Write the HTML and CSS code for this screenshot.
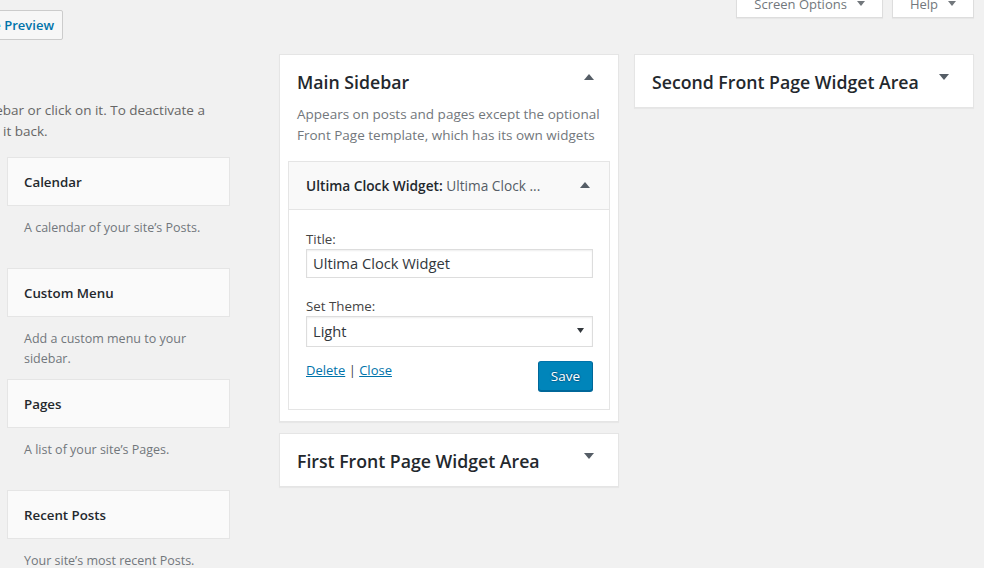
FILE: index.html
```html
<!DOCTYPE html>
<html lang="en">
<head>
<meta charset="utf-8">
<title>Widgets</title>
<link rel="stylesheet" href="styles.css">
</head>
<body>
<header class="top">
  <div class="title-area">
    <a class="page-action" href="#">Manage with Live Preview</a>
  </div>
  <div class="screen-meta">
    <button class="meta-tab">Screen Options <svg class="caret" viewBox="0 0 8 5" width="8" height="5"><path d="M0 0H8L4 5Z"/></svg></button>
    <button class="meta-tab">Help <svg class="caret" viewBox="0 0 8 5" width="8" height="5"><path d="M0 0H8L4 5Z"/></svg></button>
  </div>
</header>

<main class="columns">
  <section class="available">
    <p class="avail-desc">To activate a widget drag it to a sidebar or click on it. To deactivate a widget and delete its settings, drag it back.</p>
    <div class="widget-list">
      <div class="widget-item">
        <div class="widget-top"><h3>Calendar</h3></div>
        <p class="widget-desc">A calendar of your site’s Posts.</p>
      </div>
      <div class="widget-item">
        <div class="widget-top"><h3>Custom Menu</h3></div>
        <p class="widget-desc">Add a custom menu to your sidebar.</p>
      </div>
      <div class="widget-item">
        <div class="widget-top"><h3>Pages</h3></div>
        <p class="widget-desc">A list of your site’s Pages.</p>
      </div>
      <div class="widget-item">
        <div class="widget-top"><h3>Recent Posts</h3></div>
        <p class="widget-desc">Your site’s most recent Posts.</p>
      </div>
    </div>
  </section>

  <section class="sidebars">
    <div class="sidebar">
      <div class="sidebar-head">
        <h2>Main Sidebar</h2>
        <svg class="toggle" viewBox="0 0 10 6" width="10" height="6"><path d="M0 6L5 0L10 6Z"/></svg>
      </div>
      <p class="sidebar-desc">Appears on posts and pages except the optional Front Page template, which has its own widgets</p>
      <div class="widget">
        <div class="widget-head">
          <h3>Ultima Clock Widget:<span class="in-title"> Ultima Clock ...</span></h3>
          <svg class="toggle" viewBox="0 0 10 6" width="10" height="6"><path d="M0 6L5 0L10 6Z"/></svg>
        </div>
        <div class="widget-body">
          <label class="field-label" for="w-title">Title:</label>
          <input class="text-input" id="w-title" type="text" value="Ultima Clock Widget">
          <label class="field-label theme-label" for="w-theme">Set Theme:</label>
          <div class="select-wrap">
            <select class="select" id="w-theme"><option>Light</option><option>Dark</option></select>
            <svg class="select-arrow" viewBox="0 0 7 5" width="7" height="5"><path d="M0 0H7L3.5 5Z"/></svg>
          </div>
          <div class="controls">
            <div class="links"><a href="#">Delete</a> | <a href="#">Close</a></div>
            <button class="button-primary">Save</button>
          </div>
        </div>
      </div>
    </div>
    <div class="sidebar collapsed">
      <div class="sidebar-head">
        <h2>First Front Page Widget Area</h2>
        <svg class="toggle" viewBox="0 0 10 6" width="10" height="6"><path d="M0 0H10L5 6Z"/></svg>
      </div>
    </div>
  </section>

  <section class="sidebars">
    <div class="sidebar collapsed">
      <div class="sidebar-head">
        <h2>Second Front Page Widget Area</h2>
        <svg class="toggle" viewBox="0 0 10 6" width="10" height="6"><path d="M0 0H10L5 6Z"/></svg>
      </div>
    </div>
  </section>
</main>
</body>
</html>
```

FILE: styles.css
```css
* { box-sizing: border-box; }
html, body { margin: 0; }
body {
  background: #f1f1f1;
  font-family: "Open Sans", "Noto Sans", sans-serif;
  font-size: 13px;
  color: #444;
  width: 984px;
  height: 568px;
  overflow: hidden;
}

/* top bar */
.top {
  display: flex;
  justify-content: space-between;
  align-items: flex-start;
  height: 54px;
}
.title-area {
  width: 63px;
  display: flex;
  justify-content: flex-end;
  margin-top: 10px;
}
.page-action {
  flex-shrink: 0;
  white-space: nowrap;
  height: 30px;
  padding: 4px 8px;
  line-height: 20px;
  border: 1px solid #ccc;
  border-radius: 2px;
  background: #f7f7f7;
  color: #0073aa;
  font-weight: 600;
  font-size: 13px;
  text-decoration: none;
}
.screen-meta {
  display: flex;
  gap: 9px;
  margin: -10px 10px 0 0;
}
.meta-tab {
  height: 28px;
  display: flex;
  align-items: center;
  padding: 0 17px;
  background: #fff;
  border: 1px solid #ddd;
  border-top: none;
  box-shadow: 0 1px 1px rgba(0,0,0,.04);
  font-family: inherit;
  font-size: 13px;
  color: #72777c;
}
.caret { margin-left: 10px; fill: #72777c; }

/* columns */
.columns {
  display: grid;
  grid-template-columns: 264px 340px 340px;
  column-gap: 15px;
  align-items: start;
}

/* available widgets */
.available { padding-top: 46px; }
.avail-desc {
  margin: 0 0 15px -219px;
  width: 444px;
  text-indent: -3px;
  font-size: 13.5px;
  line-height: 21px;
  color: #666;
}
.widget-list { padding-left: 7px; width: 230px; }
.widget-top {
  height: 49px;
  display: flex;
  align-items: center;
  padding: 0 16px;
  background: #fafafa;
  border: 1px solid #e5e5e5;
}
.widget-top h3 {
  margin: 0;
  font-size: 13.3px;
  font-weight: 600;
  color: #23282d;
}
.widget-desc {
  height: 62px;
  margin: 0;
  padding: 12px 16px 0 17px;
  font-size: 12.5px;
  line-height: 20px;
  color: #72777c;
}

/* sidebars */
.sidebar {
  background: #fff;
  border: 1px solid #e5e5e5;
  box-shadow: 0 1px 1px rgba(0,0,0,.04);
}
.sidebar + .sidebar { margin-top: 11px; }
.sidebar-head {
  display: flex;
  justify-content: space-between;
  align-items: flex-start;
  padding: 15px 24px 13px 17px;
}
.sidebar-head h2 {
  margin: 0;
  font-size: 17.7px;
  line-height: 24px;
  font-weight: 600;
  color: #23282d;
}
.toggle { fill: #555d66; margin-top: 4px; flex-shrink: 0; }
.sidebar-desc {
  margin: -3.5px 10px 15px 17px;
  font-size: 13.5px;
  line-height: 21px;
  color: #72777c;
}

.widget {
  margin: 0 8px 11px;
  border: 1px solid #e5e5e5;
}
.widget-head {
  height: 48px;
  display: flex;
  align-items: center;
  justify-content: space-between;
  padding: 0 19px 0 17px;
  background: #f9f9f9;
  border-bottom: 1px solid #e5e5e5;
}
.widget-head h3 {
  margin: 0;
  font-size: 13.7px;
  font-weight: 600;
  color: #23282d;
}
.widget-head .toggle { margin-top: 0; }
.in-title { font-weight: 400; color: #555d66; }

.widget-body {
  padding: 19px 16px 18px 17px;
}
.field-label {
  display: block;
  font-size: 13.3px;
  line-height: 20px;
  color: #444;
}
.theme-label { margin-top: 18px; }
.text-input, .select {
  display: block;
  width: 100%;
  margin: 0;
  border: 1px solid #ddd;
  border-radius: 0;
  background: #fff;
  box-shadow: inset 0 1px 2px rgba(0,0,0,.07);
  font-family: inherit;
  font-size: 14.7px;
  color: #32373c;
  padding: 0 6px;
}
.text-input { height: 29px; }
.select-wrap { position: relative; }
.select {
  height: 31px;
  appearance: none;
  -webkit-appearance: none;
}
.select-arrow {
  position: absolute;
  right: 9px;
  top: 12px;
  fill: #32373c;
  pointer-events: none;
}
.controls {
  display: flex;
  justify-content: space-between;
  align-items: flex-start;
  margin-top: 13px;
}
.links {
  font-size: 13px;
  line-height: 20px;
  color: #444;
}
.links a { color: #0073aa; text-decoration: underline; }
.button-primary {
  margin-top: 1px;
  height: 30px;
  padding: 0 12px;
  background: #0085ba;
  border: 1px solid #0073aa;
  border-color: #0073aa #006799 #006799;
  border-radius: 3px;
  box-shadow: 0 1px 0 #006799;
  color: #fff;
  font-family: inherit;
  font-size: 13.5px;
  text-shadow: 0 -1px 1px #006799, 1px 0 1px #006799, 0 1px 1px #006799, -1px 0 1px #006799;
}
```
